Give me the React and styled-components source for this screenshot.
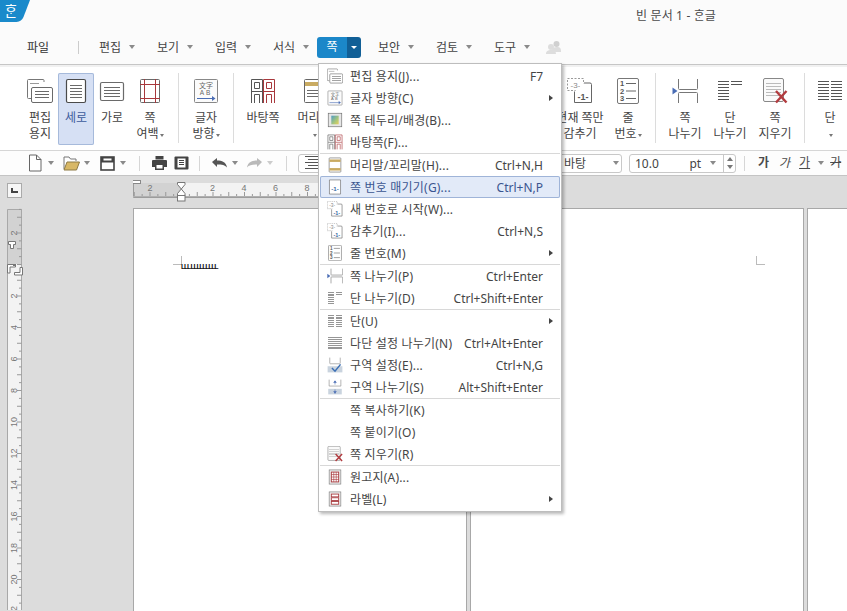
import React from "react";
import styled, { createGlobalStyle } from "styled-components";

const GRAY = "#6a6a6a";
const RED = "#a8383c";
const BLUE = "#4a6db5";

const Lines = ({ x, y, w, n, gap = 3, color = GRAY }) => (
  <g stroke={color} strokeWidth="1" shapeRendering="crispEdges">
    {Array.from({ length: n }).map((_, i) => (
      <line key={i} x1={x} x2={x + w} y1={y + i * gap + 0.5} y2={y + i * gap + 0.5} />
    ))}
  </g>
);

const Svg = ({ size = 26, children }) => (
  <svg width={size} height={size} viewBox="0 0 26 26" fill="none">{children}</svg>
);

const PageSetupIcon = ({ size }) => (
  <Svg size={size}>
    <path d="M17 4V2.5a1 1 0 0 0-1-1H1.5a1 1 0 0 0-1 1v17a1 1 0 0 0 1 1H4" stroke="#777" />
    <rect x="4.5" y="9.5" width="21" height="15" rx="1.5" fill="#fff" stroke={GRAY} />
    <Lines x={8} y={13} w={14} n={3} />
    <line x1="3" x2="12" y1="5.5" y2="5.5" stroke="#999" />
  </Svg>
);
const PortraitIcon = ({ size }) => (
  <Svg size={size}>
    <rect x="3.5" y="1.5" width="19" height="23" rx="1.5" fill="#fff" stroke="#4a4a4a" strokeWidth="1.2" />
    <Lines x={7} y={7} w={12} n={5} />
  </Svg>
);
const LandscapeIcon = ({ size }) => (
  <Svg size={size}>
    <rect x="1.5" y="4.5" width="23" height="18" rx="1.5" fill="#fff" stroke={GRAY} strokeWidth="1.2" />
    <Lines x={5} y={9} w={16} n={4} />
  </Svg>
);
const MarginIcon = ({ size }) => (
  <Svg size={size}>
    <rect x="3.5" y="1.5" width="19" height="23" rx="1" stroke={GRAY} />
    <path d="M3 6.5h20M3 20.5h20M7.5 1v24M18.5 1v24" stroke={RED} />
  </Svg>
);
const TextDirIcon = ({ size }) => (
  <Svg size={size}>
    <rect x="1.5" y="1.5" width="23" height="23" rx="1" fill="#fbfbfb" stroke="#888" />
    <text x="13" y="9.5" fontSize="7" textAnchor="middle" fill="#666" fontFamily="Noto Sans CJK SC">文字</text>
    <text x="13" y="17" fontSize="6.500" letterSpacing="2" textAnchor="middle" fill="#666" fontFamily="Liberation Sans">AB</text>
    <path d="M4 20.5h16" stroke={BLUE} />
    <path d="M19 18l3.5 2.5-3.5 2.5z" fill={BLUE} />
  </Svg>
);
const MasterIcon = ({ size }) => (
  <Svg size={size}>
    <path d="M1.500 25V1.500h11V25M2 13.500h10M4.500 4.500h5v6h-5zM4.500 25v-8.500h5V25" stroke="#555" />
    <path d="M13.500 25V1.500h11V25M14 13.500h10M16.500 4.500h5v6h-5zM16.500 25v-8.500h5V25" stroke={RED} />
  </Svg>
);
const HeaderIcon = ({ size, both }) => (
  <Svg size={size}>
    <rect x="3.5" y="1.5" width="19" height="23" rx="1" fill="#fff" stroke="#666" />
    <rect x="4" y="4" width="18" height="4" fill="#c9ab62" />
    {both ? <rect x="4" y="18" width="18" height="4" fill="#c9ab62" /> : <Lines x={6} y={12} w={14} n={3} />}
  </Svg>
);
const HideIcon = ({ size, tone = "#555" }) => (
  <Svg size={size}>
    <rect x="0.5" y="0.5" width="16" height="12" stroke="#999" strokeDasharray="2 1.5" />
    <text x="8.5" y="9.5" fontSize="8" textAnchor="middle" fill="#888" fontFamily="Liberation Sans">-3-</text>
    <path d="M17 5h6a1.500 1.500 0 0 1 1.500 1.500v18h-17v-11" stroke="#666" fill="#fff" />
    <text x="16" y="22" fontSize="9" fontWeight="700" textAnchor="middle" fill={tone} fontFamily="Liberation Sans">-1-</text>
  </Svg>
);
const PageNumIcon = ({ size }) => (
  <Svg size={size}>
    <path d="M4 1.500h18v23H4z" fill="#fff" stroke="#666" />
    <text x="13" y="20" fontSize="10" fontWeight="700" textAnchor="middle" fill="#3a6aa5" fontFamily="Liberation Sans">-1-</text>
  </Svg>
);
const LineNumIcon = ({ size }) => (
  <Svg size={size}>
    <rect x="2.5" y="0.5" width="21" height="25" rx="1.500" stroke="#777" />
    <g fontSize="7.500" fill="#555" fontFamily="Liberation Sans" fontWeight="700">
      <text x="5" y="8">1</text>
      <text x="5" y="15.500">2</text>
      <text x="5" y="23">3</text>
    </g>
    <path d="M11 5.500h10M11 13h10M11 20.500h10" stroke="#666" />
  </Svg>
);
const PageBreakIcon = ({ size }) => (
  <Svg size={size}>
    <path d="M6.500 1v9.500a1 1 0 0 0 1 1h17a1 1 0 0 0 1-1V1M6.500 25v-9.500a1 1 0 0 1 1-1h17a1 1 0 0 1 1 1V25" stroke="#777" />
    <path d="M0.500 9.500l5 3.500-5 3.500z" fill={BLUE} />
  </Svg>
);
const ColBreakIcon = ({ size }) => (
  <Svg size={size}>
    <Lines x={1} y={3} w={11} n={7} color="#555" />
    <Lines x={14} y={3} w={11} n={2} color="#555" />
  </Svg>
);
const DeleteIcon = ({ size }) => (
  <Svg size={size}>
    <rect x="1.500" y="0.500" width="20" height="23" rx="1.500" fill="#fafafa" stroke="#888" />
    <Lines x={4} y={5} w={15} n={5} color="#bbb" />
    <path d="M14 13l10.500 11.500M24.500 13L14 24.500" stroke="#b23b3f" strokeWidth="2.400" />
  </Svg>
);
const ColumnsIcon = ({ size }) => (
  <Svg size={size}>
    <Lines x={1} y={3} w={11} n={7} color="#555" />
    <Lines x={14} y={3} w={11} n={7} color="#555" />
  </Svg>
);
const MultiBreakIcon = ({ size }) => (
  <Svg size={size}>
    <Lines x={2} y={4} w={22} n={7} color="#555" />
  </Svg>
);
const BorderIcon = ({ size }) => (
  <Svg size={size}>
    <defs>
      <linearGradient id="bg" x1="0" y1="0" x2="1" y2="1">
        <stop offset="0" stopColor="#4d9bc4" />
        <stop offset="0.6" stopColor="#a8c77a" />
        <stop offset="1" stopColor="#e8cf5e" />
      </linearGradient>
    </defs>
    <rect x="2" y="2" width="22" height="22" fill="#e6e6e6" stroke="#666" />
    <rect x="7" y="6" width="12" height="14" fill="url(#bg)" />
  </Svg>
);
const SectionIcon = ({ size }) => (
  <Svg size={size}>
    <path d="M4.500 1v9a1 1 0 0 0 1 1h15a1 1 0 0 0 1-1V1" stroke="#888" />
    <path d="M1 15h24v10H1z" fill="#c9d3de" />
    <path d="M8 18l5 5 9-11" stroke="#3b6fb5" strokeWidth="2.400" />
  </Svg>
);
const SectionBreakIcon = ({ size }) => (
  <Svg size={size}>
    <path d="M3.500 1v10.500h19V1" stroke="#888" />
    <path d="M2 16h22v9H2z" fill="#c9d3de" />
    <path d="M13 3v6M13 17v7" stroke={BLUE} />
    <path d="M10 6l3-3.500L16 6zM10 20l3 3.500 3-3.500z" fill={BLUE} />
  </Svg>
);
const ManuscriptIcon = ({ size }) => (
  <Svg size={size}>
    <rect x="3.500" y="1.500" width="19" height="23" fill="#eee" stroke="#777" />
    <rect x="7" y="5" width="12" height="16" fill="#fff" stroke={RED} strokeWidth="1.500" />
    <path d="M7 9h12M7 13h12M7 17h12M11 5v16M15 5v16" stroke={RED} />
  </Svg>
);
const LabelIcon = ({ size }) => (
  <Svg size={size}>
    <rect x="3.500" y="1.500" width="19" height="23" fill="#eee" stroke="#777" />
    <rect x="7" y="5" width="12" height="4.500" fill="#fff" stroke={RED} strokeWidth="1.400" />
    <rect x="7" y="11" width="12" height="4.500" fill="#fff" stroke={RED} strokeWidth="1.400" />
    <rect x="7" y="17" width="12" height="4.500" fill="#fff" stroke={RED} strokeWidth="1.400" />
  </Svg>
);

const Logo = () => (
  <svg width="31" height="23" viewBox="0 0 31 23">
    <path d="M0 0h30l-6.500 17a8 8 0 0 1-7 5H0z" fill="#1a8acb" />
    <text x="11" y="16" fontSize="14" textAnchor="middle" fill="#fff" fontFamily="Noto Sans CJK KR">ᄒᆞᆫ</text>
  </svg>
);

const TICK = 7.875;

function HorizontalRuler() {
  const ticks = [];
  for (let i = -6; i < 36; i++) {
    const x = 48.5 + i * TICK;
    const long = i % 2 === 0;
    ticks.push(<line key={i} x1={x} x2={x} y1={long ? 12 : 14} y2="16" stroke="#999" />);
  }
  const numbers = [[-2, 17], [2, 79.5], [4, 111], [6, 142.500], [8, 174]];
  return (
    <svg width="340" height="25" viewBox="0 0 340 25">
      <rect x="0" y="3" width="48" height="14" fill="#d2d2d2" />
      <rect x="48" y="3" width="286" height="14" fill="#f3f3f3" />
      <path d="M0.500 3v14.500H333" stroke="#9c9c9c" fill="none" />
      <line x1="0" x2="333" y1="16.500" y2="16.500" stroke="#b0b0b0" />
      {ticks}
      <g fontSize="9" fill="#777" fontFamily="Liberation Sans" textAnchor="middle">
        {numbers.map(([n, x]) => <text key={n} x={x} y="10.500">{Math.abs(n)}</text>)}
      </g>
      <rect x="-0.500" y="0.500" width="8" height="3" fill="#fff" stroke="#888" />
      <path d="M44.500 2.500h7.500v2L48.300 9 44.500 4.500zM44.500 15.500V13.500L48.300 9l3.700 4.500v2z" fill="#fff" stroke="#777" />
      <rect x="44.500" y="15.500" width="7.500" height="5.500" fill="#fff" stroke="#777" />
    </svg>
  );
}

function VerticalRuler() {
  const ticks = [];
  for (let i = -7; i < 46; i++) {
    const y = 56.5 + i * TICK;
    const long = i % 2 === 0;
    ticks.push(<line key={i} x1={long ? 12 : 14} x2="16.500" y1={y} y2={y} stroke="#999" />);
  }
  const numbers = [-2, 2, 4, 6, 8, 10, 12, 14, 16, 18, 20, 22];
  return (
    <svg width="26" height="402" viewBox="0 0 26 402">
      <rect x="2" y="1" width="14" height="55" fill="#d2d2d2" />
      <rect x="2" y="56" width="14" height="346" fill="#f3f3f3" />
      <path d="M2.500 402V1.500H16.500V402" stroke="#a8a8a8" fill="none" />
      {ticks}
      <g fontSize="9" fill="#777" fontFamily="Liberation Sans" textAnchor="middle">
        {numbers.map((n) => {
          const y = 56.5 + n * 15.75;
          return <text key={n} transform={`translate(11.500 ${y}) rotate(-90)`} y="0">{Math.abs(n)}</text>;
        })}
      </g>
      <path d="M3.500 33.500h7v3h-2v4h-3v-4h-2z" fill="#fff" stroke="#777" />
      <path d="M2.500 56.500h8v2.500h-5.500v6h-2.500z" fill="#fff" stroke="#777" />
      <rect x="8" y="56" width="3" height="2" fill="#777" />
      <path d="M17.500 59.500v7.500h-8v-2.500h5.500v-5z" fill="#fff" stroke="#777" />
    </svg>
  );
}

const MENU = [
  [
    { Icon: PageSetupIcon, label: "편집 용지(J)...", keys: "F7" },
    { Icon: TextDirIcon, label: "글자 방향(C)", sub: true },
    { Icon: BorderIcon, label: "쪽 테두리/배경(B)..." },
    { Icon: MasterIcon, label: "바탕쪽(F)..." },
  ],
  [
    { Icon: HeaderIcon, label: "머리말/꼬리말(H)...", keys: "Ctrl+N,H", both: true },
    { Icon: PageNumIcon, label: "쪽 번호 매기기(G)...", keys: "Ctrl+N,P", active: true },
    { Icon: HideIcon, label: "새 번호로 시작(W)...", tone: "#3a6aa5" },
    { Icon: HideIcon, label: "감추기(I)...", keys: "Ctrl+N,S", tone: "#3a6aa5" },
    { Icon: LineNumIcon, label: "줄 번호(M)", sub: true },
  ],
  [
    { Icon: PageBreakIcon, label: "쪽 나누기(P)", keys: "Ctrl+Enter" },
    { Icon: ColBreakIcon, label: "단 나누기(D)", keys: "Ctrl+Shift+Enter" },
  ],
  [
    { Icon: ColumnsIcon, label: "단(U)", sub: true },
    { Icon: MultiBreakIcon, label: "다단 설정 나누기(N)", keys: "Ctrl+Alt+Enter" },
    { Icon: SectionIcon, label: "구역 설정(E)...", keys: "Ctrl+N,G" },
    { Icon: SectionBreakIcon, label: "구역 나누기(S)", keys: "Alt+Shift+Enter" },
  ],
  [
    { label: "쪽 복사하기(K)" },
    { label: "쪽 붙이기(O)" },
    { Icon: DeleteIcon, label: "쪽 지우기(R)" },
  ],
  [
    { Icon: ManuscriptIcon, label: "원고지(A)..." },
    { Icon: LabelIcon, label: "라벨(L)", sub: true },
  ],
];

const TOP_MENUS_LEFT = ["편집", "보기", "입력", "서식"];
const TOP_MENUS_RIGHT = ["보안", "검토", "도구"];

function RibbonButton({ icon, lines, width, selected, arrow, lineOneOnly }) {
  return (
    <RibbonItem $w={width} $selected={selected}>
      <IconSlot>{icon}</IconSlot>
      {lines.map((t, i) => (
        <RibbonLabel key={i} $selected={selected}>
          {t}
          {arrow && i === lines.length - 1 ? <SmallArrow /> : null}
        </RibbonLabel>
      ))}
      {lineOneOnly ? <RibbonLabel><SmallArrow /></RibbonLabel> : null}
    </RibbonItem>
  );
}

function DropMenu() {
  return (
    <Menu>
      {MENU.map((group, g) => (
        <MenuGroup key={g} $first={g === 0}>
          {group.map(({ Icon, label, keys, sub, active, ...rest }) => (
            <MenuRow key={label} $active={active}>
              <MenuIcon>{Icon ? <Icon size={16} {...rest} /> : null}</MenuIcon>
              <MenuText>{label}</MenuText>
              {keys ? <MenuKeys>{keys}</MenuKeys> : null}
              {sub ? <SubArrow /> : null}
            </MenuRow>
          ))}
        </MenuGroup>
      ))}
    </Menu>
  );
}

function Toolbar() {
  return (
    <ToolRow>
      <ToolIcon $ml={28}>
        <svg width="14" height="18" viewBox="0 0 14 18" fill="none"><path d="M1.500 1h7l4.500 4.500V17h-11.500zM8.500 1v4.500H13" fill="#fff" stroke="#666" /></svg>
      </ToolIcon>
      <ToolArrow $ml={6} />
      <ToolIcon $ml={9}>
        <svg width="17" height="16" viewBox="0 0 17 16" fill="none"><path d="M1 14V2h5l1.500 2H13v2" stroke="#777" fill="#fff" /><path d="M1 15l3-8h12.500l-3 8z" fill="#d8b866" stroke="#8d7a45" /></svg>
      </ToolIcon>
      <ToolArrow $ml={4} />
      <ToolIcon $ml={10}>
        <svg width="15" height="15" viewBox="0 0 15 15"><rect x="1" y="1" width="13" height="13" fill="#fff" stroke="#444" strokeWidth="1.600" /><rect x="1" y="1" width="13" height="5.500" fill="#444" /><rect x="3.500" y="2.500" width="8" height="2" fill="#fff" /></svg>
      </ToolIcon>
      <ToolArrow $ml={5} />
      <ToolSep $ml={13} />
      <ToolIcon $ml={12}>
        <svg width="15" height="14" viewBox="0 0 15 14"><path d="M3.500 0h8v3.500h-8zM0 5a1 1 0 0 1 1-1h13a1 1 0 0 1 1 1v6h-3v3H3v-3H0z" fill="#444" /><rect x="4.500" y="9" width="6" height="3.500" fill="#fff" /></svg>
      </ToolIcon>
      <ToolIcon $ml={7}>
        <svg width="15" height="14" viewBox="0 0 15 14"><rect x="0.500" y="0.500" width="14" height="13" rx="1" fill="#444" /><rect x="3.500" y="2.500" width="8" height="9" fill="#fff" /><path d="M5 4.500h5M5 6.500h5M5 8.500h5" stroke="#444" /></svg>
      </ToolIcon>
      <ToolSep $ml={10} />
      <ToolIcon $ml={12}>
        <svg width="15" height="12" viewBox="0 0 15 12"><path d="M0 5l5-4v2.500c5 0 9 1.500 10 7-2-2.500-5-3-10-3V10z" fill="#555" /></svg>
      </ToolIcon>
      <ToolArrow $ml={5} />
      <ToolIcon $ml={9}>
        <svg width="15" height="12" viewBox="0 0 15 12"><path d="M15 5l-5-4v2.500c-5 0-9 1.500-10 7 2-2.500 5-3 10-3V10z" fill="#b9b9b9" /></svg>
      </ToolIcon>
      <ToolArrow $ml={5} $muted />
      <ToolSep $ml={13} />
      <AlignBox>
        <svg width="13" height="14" viewBox="0 0 13 14"><path d="M0 .5h13M3 3.500h10M0 6.500h13M3 9.500h10M0 12.500h13" stroke="#555" /></svg>
      </AlignBox>
      <ComboWrap>
        <Combo $w={72}>
          <ComboText>바탕</ComboText>
          <ToolArrow />
        </Combo>
        <Combo $w={107} $ml={7}>
          <SizeText>10.0</SizeText>
          <UnitText>pt</UnitText>
          <ToolArrow $ml={5} />
          <Spinner>
            <SpinUp />
            <SpinDown />
          </Spinner>
        </Combo>
      </ComboWrap>
      <ToolSep $ml={8} />
      <FontStyle $ml={13} $bold>가</FontStyle>
      <FontStyle $ml={10} $italic>가</FontStyle>
      <FontStyle $ml={9} $underline>가</FontStyle>
      <ToolArrow $ml={8} />
      <FontStyle $ml={6} $strike>가</FontStyle>
    </ToolRow>
  );
}

export default function App() {
  return (
    <>
      <Global />
      <Window>
        <TitleBar>
          <Logo />
          <Title>빈 문서 1 - ᄒᆞᆫ글</Title>
        </TitleBar>
        <MenuBar>
          <FileMenu>파일</FileMenu>
          <MenuDivider />
          {TOP_MENUS_LEFT.map((m) => (
            <TopMenu key={m} $last={m === "서식"}>{m}<ToolArrow $ml={8} /></TopMenu>
          ))}
          <ActiveTab>
            <TabLabel>쪽</TabLabel>
            <TabDrop><TabArrow /></TabDrop>
          </ActiveTab>
          {TOP_MENUS_RIGHT.map((m) => (
            <TopMenu key={m}>{m}<ToolArrow $ml={8} /></TopMenu>
          ))}
          <Share>
            <svg width="15" height="14" viewBox="0 0 15 14"><circle cx="5" cy="7" r="3" fill="#ddd" /><circle cx="10.500" cy="4" r="3" fill="#d0d0d0" /><path d="M0 14c0-3 2-4 5-4s5 1 5 4zM6 10c0-2 2-3 5-3s4 1 4 4v1H10z" fill="#ddd" /></svg>
          </Share>
        </MenuBar>
        <Ribbon>
          <RibbonButton width={36} icon={<PageSetupIcon />} lines={["편집", "용지"]} />
          <RibbonButton width={36} selected icon={<PortraitIcon />} lines={["세로"]} />
          <RibbonButton width={36} icon={<LandscapeIcon />} lines={["가로"]} />
          <RibbonButton width={40} icon={<MarginIcon />} lines={["쪽", "여백"]} arrow />
          <GroupSep $ml={8} />
          <RibbonButton width={54} icon={<TextDirIcon />} lines={["글자", "방향"]} arrow />
          <GroupSep />
          <RibbonButton width={58} icon={<MasterIcon />} lines={["바탕쪽"]} />
          <RibbonButton width={44} icon={<HeaderIcon />} lines={["머리말"]} lineOneOnly />
          <RibbonGap $w={216} />
          <RibbonButton width={56} icon={<HideIcon />} lines={["현재 쪽만", "감추기"]} />
          <RibbonButton width={40} icon={<LineNumIcon />} lines={["줄", "번호"]} arrow />
          <GroupSep $ml={7} $mr={7} />
          <RibbonButton width={44} icon={<PageBreakIcon />} lines={["쪽", "나누기"]} />
          <RibbonButton width={46} icon={<ColBreakIcon />} lines={["단", "나누기"]} />
          <RibbonButton width={44} icon={<DeleteIcon />} lines={["쪽", "지우기"]} />
          <GroupSep $ml={7} $mr={7} />
          <RibbonButton width={36} icon={<ColumnsIcon />} lines={["단"]} lineOneOnly />
        </Ribbon>
        <Toolbar />
        <Workspace>
          <CornerButton><CornerMark /></CornerButton>
          <RulerTop><HorizontalRuler /></RulerTop>
          <RulerSide><VerticalRuler /></RulerSide>
          <Pages>
            <Page $w={332}>
              <CropMark $x={39} $y={47} />
              <BrokenText>LLL LLLLLLLLL</BrokenText>
            </Page>
            <Page $w={332}>
              <CropMark $x={285} $y={47} $right />
            </Page>
            <Page $w={332} />
          </Pages>
        </Workspace>
        <DropMenu />
      </Window>
    </>
  );
}

const Global = createGlobalStyle`
  html, body {
    margin: 0;
    padding: 0;
    background: #dcdcdc;
    overflow: hidden;
  }
  * { box-sizing: border-box; }
`;

const Window = styled.div`
  position: relative;
  width: 847px;
  height: 611px;
  display: flex;
  flex-direction: column;
  overflow: hidden;
  background: #fbfbfb;
  color: #444;
  font-family: "Noto Sans", "Noto Sans CJK KR", sans-serif;
  font-size: 12px;
`;

const TitleBar = styled.div`
  height: 33px;
  display: flex;
  align-items: flex-start;
  flex: none;
`;

const Title = styled.div`
  margin-left: 605px;
  line-height: 32px;
  letter-spacing: 0.15px;
  color: #4a4a4a;
`;

const MenuBar = styled.div`
  height: 31px;
  display: flex;
  align-items: center;
  flex: none;
  padding-bottom: 3px;
`;

const FileMenu = styled.div`
  width: 78px;
  padding-left: 27px;
  color: #333;
`;

const MenuDivider = styled.div`
  width: 1px;
  height: 13px;
  background: #ccc;
  margin-right: 20px;
`;

const TopMenu = styled.div`
  width: ${(p) => (p.$last ? "44px" : "58px")};
  display: flex;
  align-items: center;
  white-space: nowrap;
`;

const ActiveTab = styled.div`
  width: 44px;
  height: 21px;
  margin-right: 17px;
  display: flex;
  border-radius: 3px;
  overflow: hidden;
  color: #fff;
`;

const TabLabel = styled.div`
  width: 30px;
  background: #1b87c9;
  text-align: center;
  line-height: 20px;
`;

const TabDrop = styled.div`
  flex: 1;
  background: #115f96;
  display: flex;
  align-items: center;
  justify-content: center;
`;

const TabArrow = styled.span`
  border-top: 3px solid #fff;
  border-left: 3px solid transparent;
  border-right: 3px solid transparent;
`;

const Share = styled.div`
  margin-left: -6px;
  display: flex;
`;

const Ribbon = styled.div`
  height: 87px;
  flex: none;
  display: flex;
  align-items: flex-start;
  padding: 8px 0 0 22px;
  background: #fff;
  border-top: 1px solid #c6c6c6;
  border-bottom: 1px solid #d6d6d6;
  box-shadow: inset 0 2px 0 #f1f1f1;
`;

const RibbonItem = styled.div`
  width: ${(p) => p.$w}px;
  height: 72px;
  flex: none;
  display: flex;
  flex-direction: column;
  align-items: center;
  padding-top: 5px;
  white-space: nowrap;
  border-radius: 2px;
  ${(p) => p.$selected && "background: #d6e0f4; box-shadow: inset 0 0 0 1px #a6badb;"}
`;

const IconSlot = styled.div`
  height: 26px;
  margin-bottom: 6px;
  display: flex;
`;

const RibbonLabel = styled.div`
  line-height: 16px;
  height: 16px;
  display: flex;
  align-items: center;
  color: ${(p) => (p.$selected ? "#3c5a9c" : "#444")};
`;

const SmallArrow = styled.span`
  margin-left: 1px;
  margin-top: 2px;
  border-top: 3px solid #777;
  border-left: 2.5px solid transparent;
  border-right: 2.5px solid transparent;
`;

const GroupSep = styled.div`
  width: 1px;
  height: 70px;
  flex: none;
  margin-left: ${(p) => p.$ml || 0}px;
  margin-right: ${(p) => p.$mr || 0}px;
  background: #dcdcdc;
`;

const RibbonGap = styled.div`
  width: ${(p) => p.$w}px;
  flex: none;
`;

const ToolRow = styled.div`
  height: 25px;
  flex: none;
  display: flex;
  align-items: center;
  background: #fdfdfd;
  border-bottom: 1px solid #c4c4c4;
  white-space: nowrap;
`;

const ToolIcon = styled.div`
  margin-left: ${(p) => p.$ml || 0}px;
  display: flex;
`;

const ToolArrow = styled.span`
  flex: none;
  margin-left: ${(p) => p.$ml || 0}px;
  border-top: 4px solid ${(p) => (p.$muted ? "#ccc" : "#8a8a8a")};
  border-left: 3.500px solid transparent;
  border-right: 3.500px solid transparent;
`;

const ToolSep = styled.div`
  width: 1px;
  height: 15px;
  flex: none;
  margin-left: ${(p) => p.$ml}px;
  background: #d6d6d6;
`;

const AlignBox = styled.div`
  width: 30px;
  height: 19px;
  margin-left: 11px;
  padding-left: 6px;
  flex: none;
  display: flex;
  align-items: center;
  background: #fff;
  border: 1px solid #c8c8c8;
  border-radius: 3px;
`;

const ComboWrap = styled.div`
  margin-left: 222px;
  display: flex;
  align-items: center;
`;

const Combo = styled.div`
  width: ${(p) => p.$w}px;
  height: 19px;
  flex: none;
  margin-left: ${(p) => p.$ml || 0}px;
  display: flex;
  align-items: center;
  justify-content: ${(p) => (p.$w === 72 ? "space-between" : "flex-start")};
  padding: 0 2px 0 5px;
  background: #fff;
  border: 1px solid #c8c8c8;
  border-radius: 3px;
`;

const ComboText = styled.span`
  font-size: 12px;
  padding-left: 8px;
`;

const SizeText = styled.span`
  width: 56px;
`;

const UnitText = styled.span`
  width: 16px;
`;

const Spinner = styled.div`
  margin-left: 7px;
  padding-left: 3px;
  align-self: stretch;
  border-left: 1px solid #c8c8c8;
  display: flex;
  flex-direction: column;
  justify-content: center;
  gap: 4px;
`;

const SpinUp = styled.span`
  border-bottom: 4px solid #777;
  border-left: 3.500px solid transparent;
  border-right: 3.500px solid transparent;
`;

const SpinDown = styled.span`
  border-top: 4px solid #777;
  border-left: 3.500px solid transparent;
  border-right: 3.500px solid transparent;
`;

const FontStyle = styled.span`
  margin-left: ${(p) => p.$ml}px;
  font-size: 12px;
  line-height: 16px;
  color: #4a4a4a;
  flex: none;
  ${(p) => p.$bold && "font-weight: 700;"}
  ${(p) => p.$italic && "font-style: italic;"}
  ${(p) => p.$underline && "text-decoration: underline;"}
  ${(p) => p.$strike && "text-decoration: line-through;"}
`;

const Workspace = styled.div`
  flex: 1;
  min-height: 0;
  background: #dcdcdc;
  display: grid;
  grid-template-columns: 133px 1fr;
  grid-template-rows: 32px 1fr;
  overflow: hidden;
`;

const CornerButton = styled.div`
  width: 15px;
  height: 15px;
  margin: 7px 0 0 7px;
  display: flex;
  align-items: center;
  justify-content: center;
  background: #f6f6f6;
  border: 1px solid #aaa;
`;

const CornerMark = styled.span`
  width: 7px;
  height: 5px;
  border-left: 2px solid #444;
  border-bottom: 2px solid #444;
`;

const RulerTop = styled.div`
  padding-top: 4px;
  display: flex;
`;

const RulerSide = styled.div`
  padding-left: 5px;
  overflow: hidden;
`;

const Pages = styled.div`
  display: flex;
  gap: 3px;
  padding-left: 0;
  overflow: hidden;
`;

const Page = styled.div`
  position: relative;
  width: ${(p) => p.$w + 2}px;
  height: 480px;
  flex: none;
  background: #fff;
  border: 1px solid #a8a8a8;
`;

const CropMark = styled.span`
  position: absolute;
  left: ${(p) => p.$x}px;
  top: ${(p) => p.$y}px;
  width: 9px;
  height: 9px;
  border-bottom: 1px solid #bbb;
  ${(p) => (p.$right ? "border-left: 1px solid #bbb;" : "border-right: 1px solid #bbb;")}
`;

const BrokenText = styled.span`
  position: absolute;
  left: 47px;
  top: 54px;
  font-family: "Liberation Sans", sans-serif;
  font-size: 7px;
  line-height: 8px;
  font-weight: 700;
  letter-spacing: -1.300px;
  color: #111;
  white-space: nowrap;
`;

const Menu = styled.div`
  position: absolute;
  left: 318px;
  top: 63px;
  width: 244px;
  height: 449px;
  padding: 1px 1px 1px;
  background: #fff;
  border: 1px solid #bdbdbd;
  box-shadow: 2px 2px 3px rgba(0, 0, 0, 0.28);
`;

const MenuGroup = styled.div`
  ${(p) => !p.$first && "border-top: 1px solid #d8d8d8;"}
`;

const MenuRow = styled.div`
  height: 22px;
  position: relative;
  display: flex;
  align-items: center;
  padding-right: 17px;
  white-space: nowrap;
  color: ${(p) => (p.$active ? "#3a5590" : "#454545")};
  ${(p) => p.$active && "background: #e2eaf8; box-shadow: inset 0 0 0 1px #9fb4d8; border-radius: 2px;"}
`;

const MenuIcon = styled.span`
  width: 30px;
  flex: none;
  display: flex;
  padding-left: 7px;
`;

const MenuText = styled.span`
  flex: 1;
  letter-spacing: 0.2px;
`;

const MenuKeys = styled.span`
  text-align: right;
`;

const SubArrow = styled.span`
  position: absolute;
  right: 7px;
  top: 8px;
  border-left: 4px solid #444;
  border-top: 3px solid transparent;
  border-bottom: 3px solid transparent;
`;
